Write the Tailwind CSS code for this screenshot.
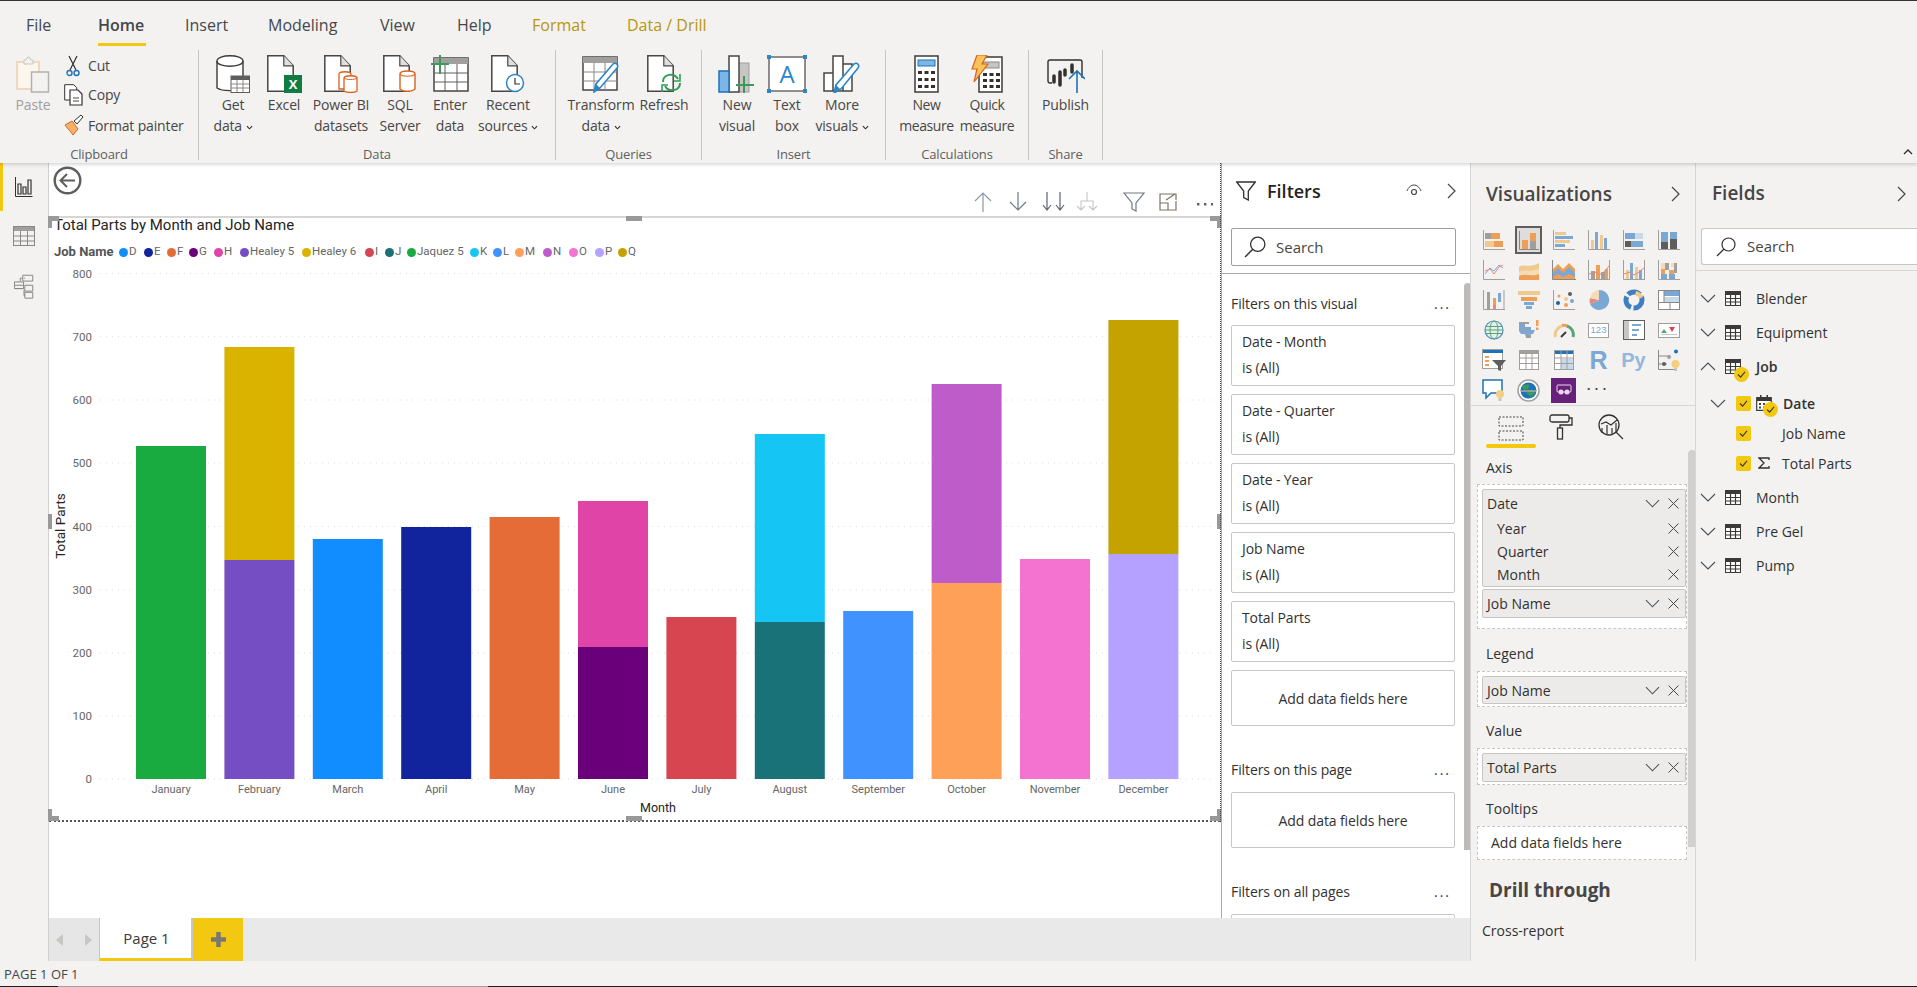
<!doctype html>
<html>
<head>
<meta charset="UTF-8">
<title>Power BI Desktop</title>
<script src="https://cdn.jsdelivr.net/npm/@tailwindcss/browser@4"></script>
</head>
<body class="m-0">
<!-- shared icons -->
<svg class="hidden">
  <symbol id="chev-down" viewBox="0 0 16 9"><path d="M1 1l7 7 7-7" fill="none" stroke="#4a4f55" stroke-width="1.1"/></symbol>
  <symbol id="chev-up" viewBox="0 0 16 9"><path d="M1 8l7-7 7 7" fill="none" stroke="#4a4f55" stroke-width="1.1"/></symbol>
  <symbol id="chev-right" viewBox="0 0 9 16"><path d="M1 1l7 7-7 7" fill="none" stroke="#484644" stroke-width="1.2"/></symbol>
  <symbol id="close" viewBox="0 0 11 11"><path d="M.5.5l10 10M10.5.5l-10 10" fill="none" stroke="#484644" stroke-width="1"/></symbol>
  <symbol id="table" viewBox="0 0 16 15"><rect x=".5" y=".5" width="15" height="14" fill="#fff" stroke="#3b3a39"/><rect x="0" y="0" width="16" height="4" fill="#3b3a39"/><path d="M5.500 4v10M10.500 4v10M1 7.500h14M1 11h14" stroke="#3b3a39" stroke-width="1.200"/></symbol>
  <symbol id="search" viewBox="0 0 20 20"><circle cx="12.500" cy="7.500" r="6.500" fill="none" stroke="#323130" stroke-width="1.200"/><path d="M8 12l-7 7" stroke="#323130" stroke-width="1.300"/></symbol>
  <symbol id="check" viewBox="0 0 10 8"><path d="M1 4l3 3 5-6" fill="none" stroke="#3b3a39" stroke-width="1.300"/></symbol>
  <symbol id="doc" viewBox="0 0 27 37"><path d="M.8.8h16l9.400 10v25.400H.8z" fill="#fff" stroke="#484644" stroke-width="1.500"/><path d="M16.800.8v10h9.400" fill="#e1dfdd" stroke="#484644" stroke-width="1.200"/></symbol>
</svg>

<div class="w-[1917px] h-[987px] flex flex-col overflow-hidden bg-[#f3f2f1] text-[#323130] text-[14px] [font-family:'Open_Sans',sans-serif]">
  <div class="h-px bg-[#333]"></div>

  <!-- tabs -->
  <div class="h-[45px] flex pl-[26px] text-[16px] text-[#44474b] relative z-20">
    <div class="w-[72px] leading-[48px]">File</div>
    <div class="w-[87px] leading-[48px]"><span class="block w-[48px] h-[45px] font-semibold border-b-[3px] border-[#f2c811]">Home</span></div>
    <div class="w-[83px] leading-[48px]">Insert</div>
    <div class="w-[112px] leading-[48px]">Modeling</div>
    <div class="w-[77px] leading-[48px]">View</div>
    <div class="w-[75px] leading-[48px]">Help</div>
    <div class="w-[95px] leading-[48px] text-[#b8960c]">Format</div>
    <div class="leading-[48px] text-[#b8960c]">Data / Drill</div>
  </div>

  <!-- ribbon -->
  <div class="h-[117px] pt-[4px] flex relative z-10 shadow-[0_2px_3px_rgba(0,0,0,0.14)] text-[14px] leading-[21px] text-center text-[#484644] tracking-[-0.15px]">
    <!-- clipboard -->
    <div class="w-[199px] h-[110px] border-r border-[#c8c6c4] flex flex-col">
      <div class="h-[95px] flex">
        <div class="w-[66px] flex flex-col items-center pt-[5px] text-[#a19f9d]">
          <svg width="34" height="38" viewBox="0 0 34 38"><path d="M1 7h22v27H1z" fill="#fdf6ec" stroke="#eed9bd" stroke-width="2"/><path d="M8 5h2l2-3h1l2 3h2v4H8z" fill="#f3f2f1" stroke="#c8c6c4"/><rect x="15.500" y="17" width="17" height="20" fill="#f3f2f1" stroke="#b3b0ad" stroke-width="1.500"/></svg>
          <span class="mt-[1px]">Paste</span>
        </div>
        <div class="flex flex-col pt-[1px] text-left">
          <div class="h-[29px] flex items-center">
            <svg class="w-[14px] h-[22px]" viewBox="0 0 14 22"><path d="M3 1l7 14M11 1L4 15" stroke="#323130" stroke-width="1.200" fill="none"/><circle cx="3.500" cy="18" r="2.500" fill="none" stroke="#1e72b8" stroke-width="1.400"/><circle cx="10.500" cy="18" r="2.500" fill="none" stroke="#1e72b8" stroke-width="1.400"/></svg>
            <span class="ml-[8px]">Cut</span>
          </div>
          <div class="h-[29px] flex items-center">
            <svg class="-ml-[2px] w-[20px] h-[22px]" viewBox="0 0 20 22"><path d="M.7.7h9l3 3V16H.7z" fill="#fff" stroke="#323130"/><path d="M6 6h8l4 4v11H6z" fill="#fff" stroke="#323130" stroke-width="1.200"/><path d="M9 14h6M9 17h6" stroke="#484644"/></svg>
            <span class="ml-[4px]">Copy</span>
          </div>
          <div class="h-[32px] flex items-center">
            <svg class="-ml-[2px] w-[20px] h-[22px]" viewBox="0 0 20 22"><path d="M1 11l7-4 6 8-5 6c-2-3-5-6-8-10z" fill="#f7b267" stroke="#d9631e"/><path d="M10 7l7-6 2 2-6 7z" fill="#fff" stroke="#323130"/></svg>
            <span class="ml-[4px]">Format painter</span>
          </div>
        </div>
      </div>
      <div class="h-[15px] leading-[18px] text-[13px] text-[#605e5c]">Clipboard</div>
    </div>

    <!-- data -->
    <div class="w-[357px] h-[110px] border-r border-[#c8c6c4] flex flex-col">
      <div class="h-[95px] flex pl-[8px]">
        <div class="w-[52px] flex flex-col items-center pt-[5px]">
          <svg width="34" height="38" viewBox="0 0 34 38"><path d="M1 6c0-7 26-7 26 0v27c-3 3-20 4-26 0z" fill="#fff" stroke="#3b3a39" stroke-width="1.400"/><path d="M1 6c0 7 26 7 26 0" fill="none" stroke="#3b3a39" stroke-width="1.400"/><rect x="15" y="21" width="18.500" height="16.500" fill="#fff" stroke="#605e5c"/><rect x="15" y="21" width="18.500" height="4" fill="#605e5c"/><path d="M21 25v12M27 25v12M15 29h18M15 33h18" stroke="#8a8886"/></svg>
          <span class="mt-[1px]">Get<br>data <svg class="inline w-[7px] h-[5px]" viewBox="0 0 8 5"><path d="M1 1l3 3 3-3" fill="none" stroke="#323130" stroke-width="1.300"/></svg></span>
        </div>
        <div class="w-[50px] flex flex-col items-center pt-[5px]">
          <svg width="35" height="38" viewBox="0 0 35 38"><use href="#doc" width="27" height="37"/><rect x="17" y="20" width="18" height="18" fill="#107c41"/><text x="26" y="34" text-anchor="middle" font-size="13" font-weight="700" fill="#fff">X</text></svg>
          <span class="mt-[1px]">Excel</span>
        </div>
        <div class="w-[64px] flex flex-col items-center pt-[5px]">
          <svg width="35" height="38" viewBox="0 0 35 38"><use href="#doc" width="27" height="37"/><path d="M15 19c0-3 12-3 12 0v15H15z" fill="#fff" stroke="#d9631e" stroke-width="1.300"/><path d="M20 23c0-3 13-3 13 0v13c-3 2-10 2-13 0z" fill="#fff" stroke="#d9631e" stroke-width="1.300"/><path d="M20 23c2 2 11 2 13 0" fill="none" stroke="#d9631e"/></svg>
          <span class="mt-[1px] whitespace-nowrap">Power BI<br>datasets</span>
        </div>
        <div class="w-[54px] flex flex-col items-center pt-[5px]">
          <svg width="35" height="38" viewBox="0 0 35 38"><use href="#doc" width="27" height="37"/><path d="M17 19c0-4 15-4 15 0v15c-3 3-12 3-15 0z" fill="#fff" stroke="#d9631e" stroke-width="1.400"/><path d="M17 19c2 3 13 3 15 0" fill="none" stroke="#d9631e" stroke-width="1.200"/></svg>
          <span class="mt-[1px]">SQL<br>Server</span>
        </div>
        <div class="w-[46px] flex flex-col items-center pt-[5px]">
          <svg width="38" height="38" viewBox="0 0 38 38"><rect x="3" y="3" width="34" height="33" fill="#fff" stroke="#484644" stroke-width="1.500"/><rect x="3" y="3" width="34" height="6" fill="#a19f9d"/><path d="M14 9v27M26 9v27M3 18h34M3 27h34" stroke="#605e5c"/><path d="M9 0v19M0 9h18" stroke="#3b9a57" stroke-width="2"/></svg>
          <span class="mt-[1px]">Enter<br>data</span>
        </div>
        <div class="w-[70px] flex flex-col items-center pt-[5px]">
          <svg width="34" height="38" viewBox="0 0 34 38"><use href="#doc" width="27" height="37"/><circle cx="24" cy="28" r="8.500" fill="#fff" stroke="#2a86c7" stroke-width="1.500"/><path d="M24 23v6h5" fill="none" stroke="#323130" stroke-width="1.200"/></svg>
          <span class="mt-[1px]">Recent<br>sources <svg class="inline w-[7px] h-[5px]" viewBox="0 0 8 5"><path d="M1 1l3 3 3-3" fill="none" stroke="#323130" stroke-width="1.300"/></svg></span>
        </div>
      </div>
      <div class="h-[15px] leading-[18px] text-[13px] text-[#605e5c]">Data</div>
    </div>

    <!-- queries -->
    <div class="w-[146px] h-[110px] border-r border-[#c8c6c4] flex flex-col">
      <div class="h-[95px] flex pl-[9px]">
        <div class="w-[72px] flex flex-col items-center pt-[5px]">
          <svg width="38" height="38" viewBox="0 0 38 38"><rect x="1" y="2" width="34" height="33" fill="#fff" stroke="#484644" stroke-width="1.500"/><rect x="1" y="2" width="34" height="6" fill="#a19f9d"/><path d="M12 8v27M23 8v27M1 17h34M1 26h34" stroke="#8a8886"/><path d="M12 37l2-8 17-20c3-2 6 1 4 4L18 33z" fill="#fff" stroke="#2a86c7" stroke-width="1.600"/><path d="M12 37l2-8 4 4z" fill="#2a86c7"/></svg>
          <span class="mt-[1px]">Transform<br>data <svg class="inline w-[7px] h-[5px]" viewBox="0 0 8 5"><path d="M1 1l3 3 3-3" fill="none" stroke="#323130" stroke-width="1.300"/></svg></span>
        </div>
        <div class="w-[54px] flex flex-col items-center pt-[5px]">
          <svg width="35" height="38" viewBox="0 0 35 38"><use href="#doc" width="27" height="37"/><path d="M16 27c0-8 11-10 15-3M33 28c0 8-11 10-15 3" fill="none" stroke="#2f9e55" stroke-width="2" /><path d="M33 19v7h-6M15 37v-7h6" fill="none" stroke="#2f9e55" stroke-width="1.600"/></svg>
          <span class="mt-[1px]">Refresh</span>
        </div>
      </div>
      <div class="h-[15px] leading-[18px] text-[13px] text-[#605e5c]">Queries</div>
    </div>

    <!-- insert -->
    <div class="w-[184px] h-[110px] border-r border-[#c8c6c4] flex flex-col">
      <div class="h-[95px] flex pl-[10px]">
        <div class="w-[50px] flex flex-col items-center pt-[5px]">
          <svg width="38" height="38" viewBox="0 0 38 38"><rect x="20" y="8" width="11" height="29" fill="#c8c6c4" stroke="#a19f9d"/><rect x="11" y="1" width="10" height="36" fill="#fff" stroke="#484644" stroke-width="1.500"/><rect x="1" y="16" width="10" height="21" fill="#7db5e8" stroke="#1e72b8" stroke-width="1.500"/><path d="M26 21v17M18 30h18" stroke="#3b9a57" stroke-width="2"/></svg>
          <span class="mt-[1px]">New<br>visual</span>
        </div>
        <div class="w-[50px] flex flex-col items-center pt-[5px]">
          <svg width="40" height="38" viewBox="0 0 40 38"><rect x="2" y="3" width="36" height="34" transform="translate(0 -1)" fill="#fff" stroke="#484644" stroke-width="1.200"/><rect y="0" width="4" height="4" fill="#2a86c7"/><rect x="36" y="0" width="4" height="4" fill="#2a86c7"/><rect y="34" width="4" height="4" fill="#2a86c7"/><rect x="36" y="34" width="4" height="4" fill="#2a86c7"/><text x="20" y="28" text-anchor="middle" font-size="24" fill="#2a86c7">A</text></svg>
          <span class="mt-[1px]">Text<br>box</span>
        </div>
        <div class="w-[60px] flex flex-col items-center pt-[5px]">
          <svg width="38" height="38" viewBox="0 0 38 38"><path d="M1 18h9v18H1zM10 1h10v35H10zM20 9h9v27H20z" fill="#fff" stroke="#484644" stroke-width="1.500"/><path d="M11 38l2-8 18-21c3-2 6 1 4 4L18 34z" fill="#fff" stroke="#2a86c7" stroke-width="1.600"/><path d="M11 38l2-8 4 4z" fill="#2a86c7"/></svg>
          <span class="mt-[1px] whitespace-nowrap">More<br>visuals <svg class="inline w-[7px] h-[5px]" viewBox="0 0 8 5"><path d="M1 1l3 3 3-3" fill="none" stroke="#323130" stroke-width="1.300"/></svg></span>
        </div>
      </div>
      <div class="h-[15px] leading-[18px] text-[13px] text-[#605e5c]">Insert</div>
    </div>

    <!-- calculations -->
    <div class="w-[143px] h-[110px] border-r border-[#c8c6c4] flex flex-col">
      <div class="h-[95px] flex pl-[10px] tracking-[-0.4px]">
        <div class="w-[61px] flex flex-col items-center pt-[5px]">
          <svg width="25" height="38" viewBox="0 0 25 38"><rect x="1" y="1" width="23" height="36" fill="#fff" stroke="#484644" stroke-width="1.600"/><rect x="4" y="5" width="17" height="6" fill="#7db5e8" stroke="#1e72b8"/><path d="M4 16h4v3H4zM10.500 16h4v3h-4zM17 16h4v3h-4zM4 23h4v3H4zM10.500 23h4v3h-4zM17 23h4v3h-4zM4 30h4v3H4zM10.500 30h4v3h-4zM17 30h4v3h-4z" fill="#323130"/></svg>
          <span class="mt-[1px]">New<br>measure</span>
        </div>
        <div class="w-[60px] flex flex-col items-center pt-[5px]">
          <svg width="32" height="38" viewBox="0 0 32 38"><rect x="8" y="2" width="23" height="35" fill="#fff" stroke="#484644" stroke-width="1.600"/><rect x="12" y="7" width="16" height="6" fill="#c8c6c4" stroke="#8a8886"/><path d="M12 18h4v3h-4zM18.500 18h4v3h-4zM25 18h4v3h-4zM12 24h4v3h-4zM18.500 24h4v3h-4zM25 24h4v3h-4zM12 30h4v3h-4zM18.500 30h4v3h-4zM25 30h4v3h-4z" fill="#323130"/><path d="M6 0h10l-5 9h6L3 27l3-13H1z" fill="#f7c35b" stroke="#d9631e" stroke-width="1.200"/></svg>
          <span class="mt-[1px]">Quick<br>measure</span>
        </div>
      </div>
      <div class="h-[15px] leading-[18px] text-[13px] text-[#605e5c]">Calculations</div>
    </div>

    <!-- share -->
    <div class="w-[74px] h-[110px] border-r border-[#c8c6c4] flex flex-col">
      <div class="h-[95px] flex flex-col items-center pt-[5px]">
        <svg width="38" height="38" viewBox="0 0 38 38"><path d="M5 28H3a2 2 0 0 1-2-2V7a2 2 0 0 1 2-2h30a2 2 0 0 1 2 2v16" fill="none" stroke="#323130" stroke-width="1.400"/><path d="M7 27v-6M13 30V17M18 20V15M25 17v-7" stroke="#323130" stroke-width="3.500" stroke-linecap="round"/><path d="M30 38V17M22 24l8-8 8 8" fill="none" stroke="#1e72b8" stroke-width="1.600"/></svg>
        <span class="mt-[1px]">Publish</span>
      </div>
      <div class="h-[15px] leading-[18px] text-[13px] text-[#605e5c]">Share</div>
    </div>

    <svg class="absolute right-[4px] bottom-[8px]" width="10" height="6" viewBox="0 0 10 6"><path d="M1 5l4-4 4 4" fill="none" stroke="#323130" stroke-width="1.400"/></svg>
  </div>

  <!-- main -->
  <div class="h-[798px] flex">
    <!-- page views -->
    <div class="w-[49px] border-r border-[#d2d0ce] flex flex-col">
      <div class="h-[48px] border-l-[3px] border-[#f2c811] flex items-center justify-center pr-[4px]">
        <svg width="18" height="20" viewBox="0 0 18 20"><path d="M.5 0v19.500h17" fill="none" stroke="#323130"/><path d="M3 7h3v10H3zM8 10h3v7H8zM13 3h3v14h-3z" fill="none" stroke="#323130" stroke-width="1.200"/></svg>
      </div>
      <div class="h-[50px] flex items-center justify-center">
        <svg width="22" height="20" viewBox="0 0 22 20"><rect x=".5" y=".5" width="21" height="19" fill="none" stroke="#8a8886"/><rect x="1" y="1" width="20" height="4" fill="#a19f9d"/><path d="M7.500 5v14M14.500 5v14M1 10h20M1 15h20" stroke="#8a8886"/></svg>
      </div>
      <div class="h-[50px] flex items-center justify-center">
        <svg width="20" height="25" viewBox="0 0 24 30"><path d="M10.500 1.500h12v7h-12zM.5 9.500h11v8H.5zM.5 13.500h11M13 13.500h9.500v7H13zM.5 17.500h11M13 22h9.500v7H13zM13 5h-1" fill="none" stroke="#8a8886" stroke-width="1.200"/><path d="M10.500 5h-3v4M12 19v7h1" fill="none" stroke="#8a8886" stroke-width="1.200"/></svg>
      </div>
    </div>

    <div class="w-[1421px] flex flex-col">
      <div class="h-[755px] flex">
        <!-- report canvas -->
        <div class="w-[1172px] bg-white relative">
          <!-- back button -->
          <svg class="absolute left-[4px] top-[3px]" width="29" height="29" viewBox="0 0 29 29"><circle cx="14.500" cy="14.500" r="12.800" fill="none" stroke="#605e5c" stroke-width="2.400"/><path d="M22 14.500H8M14 8l-6.500 6.500L14 21" fill="none" stroke="#605e5c" stroke-width="2"/></svg>
          <!-- visual header -->
          <svg class="absolute left-[924px] top-[28px]" width="240" height="22" viewBox="0 0 240 22">
            <path d="M10 21V2M2 10l8-8 8 8" fill="none" stroke="#8a9aa5" stroke-width="1.200"/>
            <path d="M45 1v18M37 11l8 8 8-8" fill="none" stroke="#6d7a85" stroke-width="1.200"/>
            <path d="M74 1v18M70 14l4 5 4-5M87 1v18M83 14l4 5 4-5" fill="none" stroke="#5a6670" stroke-width="1.200"/>
            <path d="M114 1v9M108 18v-8h12v8M104 15l4 4 4-4M116 15l4 4 4-4" fill="none" stroke="#c8c6c4" stroke-width="1.100"/>
            <path d="M151 2h20l-8 10v8l-4-2v-6z" fill="none" stroke="#6d7a85" stroke-width="1.200"/>
            <path d="M197 3h-10v16h16v-9M187 12h8v7M193 9l9-6M197 3h6v6" fill="none" stroke="#7d7468" stroke-width="1.200"/>
            <path d="M224 12h2.400v2.400H224zM231 12h2.400v2.400H231zM238 12h2v2.400H238z" fill="#605e5c"/>
          </svg>

          <!-- selected visual -->
          <div class="absolute left-0 top-[53px] w-[1171px] h-[606px] border-t-2 border-[#d8d6d4] border-b-2 [border-bottom-style:dotted] [border-bottom-color:#555] [font-family:Roboto,sans-serif]">
            <div class="pl-[5px] h-[16px] leading-[14px] text-[15px] text-[#252423]">Total Parts by Month and Job Name</div>
            <div class="mt-[9px] pl-[5px] h-[18px] flex items-center text-[11.500px] text-[#666]">
              <b class="w-[65px] text-[13px] font-bold text-[#555] whitespace-nowrap">Job Name</b>
              <div class="w-[25px] flex items-center gap-[1px]"><i class="w-[9px] h-[9px] rounded-full bg-[#118dff]"></i>D</div>
              <div class="w-[23px] flex items-center gap-[1px]"><i class="w-[9px] h-[9px] rounded-full bg-[#12239e]"></i>E</div>
              <div class="w-[22px] flex items-center gap-[1px]"><i class="w-[9px] h-[9px] rounded-full bg-[#e66c37]"></i>F</div>
              <div class="w-[25px] flex items-center gap-[1px]"><i class="w-[9px] h-[9px] rounded-full bg-[#6b007b]"></i>G</div>
              <div class="w-[26px] flex items-center gap-[1px]"><i class="w-[9px] h-[9px] rounded-full bg-[#e044a7]"></i>H</div>
              <div class="w-[62px] flex items-center gap-[1px]"><i class="w-[9px] h-[9px] rounded-full bg-[#744ec2]"></i>Healey 5</div>
              <div class="w-[63px] flex items-center gap-[1px]"><i class="w-[9px] h-[9px] rounded-full bg-[#d9b300]"></i>Healey 6</div>
              <div class="w-[20px] flex items-center gap-[1px]"><i class="w-[9px] h-[9px] rounded-full bg-[#d64550]"></i>I</div>
              <div class="w-[22px] flex items-center gap-[1px]"><i class="w-[9px] h-[9px] rounded-full bg-[#197278]"></i>J</div>
              <div class="w-[63px] flex items-center gap-[1px]"><i class="w-[9px] h-[9px] rounded-full bg-[#1aab40]"></i>Jaquez 5</div>
              <div class="w-[23px] flex items-center gap-[1px]"><i class="w-[9px] h-[9px] rounded-full bg-[#15c6f4]"></i>K</div>
              <div class="w-[22px] flex items-center gap-[1px]"><i class="w-[9px] h-[9px] rounded-full bg-[#4092ff]"></i>L</div>
              <div class="w-[28px] flex items-center gap-[1px]"><i class="w-[9px] h-[9px] rounded-full bg-[#ffa058]"></i>M</div>
              <div class="w-[26px] flex items-center gap-[1px]"><i class="w-[9px] h-[9px] rounded-full bg-[#be5dc9]"></i>N</div>
              <div class="w-[26px] flex items-center gap-[1px]"><i class="w-[9px] h-[9px] rounded-full bg-[#f472d0]"></i>O</div>
              <div class="w-[23px] flex items-center gap-[1px]"><i class="w-[9px] h-[9px] rounded-full bg-[#b5a1ff]"></i>P</div>
              <div class="flex items-center gap-[1px]"><i class="w-[9px] h-[9px] rounded-full bg-[#c4a200]"></i>Q</div>
            </div>
            <!-- plot -->
            <svg class="absolute left-0 top-[-2px]" width="1171" height="606" viewBox="49 216 1171 606" font-family="Roboto, sans-serif">
              <g stroke="#ddd" stroke-dasharray="1 5">
                <path d="M100 273.500H1211M100 336.700H1211M100 400H1211M100 463H1211M100 526.500H1211M100 590H1211M100 653H1211M100 716H1211M100 779H1211"/>
              </g>
              <g font-size="11.500" fill="#666" text-anchor="end">
                <text x="92" y="277.500">800</text><text x="92" y="340.700">700</text><text x="92" y="404">600</text><text x="92" y="467">500</text><text x="92" y="530.500">400</text><text x="92" y="594">300</text><text x="92" y="657">200</text><text x="92" y="720">100</text><text x="92" y="783">0</text>
              </g>
              <rect x="136" y="446" width="70" height="333" fill="#1aab40"/>
              <rect x="224.400" y="347" width="70" height="213" fill="#d9b300"/><rect x="224.400" y="560" width="70" height="219" fill="#744ec2"/>
              <rect x="312.800" y="539" width="70" height="240" fill="#118dff"/>
              <rect x="401.200" y="527" width="70" height="252" fill="#12239e"/>
              <rect x="489.600" y="517" width="70" height="262" fill="#e66c37"/>
              <rect x="578" y="501" width="70" height="146" fill="#e044a7"/><rect x="578" y="647" width="70" height="132" fill="#6b007b"/>
              <rect x="666.400" y="617" width="70" height="162" fill="#d64550"/>
              <rect x="754.800" y="434" width="70" height="188" fill="#15c6f4"/><rect x="754.800" y="622" width="70" height="157" fill="#197278"/>
              <rect x="843.200" y="611" width="70" height="168" fill="#4092ff"/>
              <rect x="931.600" y="384" width="70" height="199" fill="#be5dc9"/><rect x="931.600" y="583" width="70" height="196" fill="#ffa058"/>
              <rect x="1020" y="559" width="70" height="220" fill="#f472d0"/>
              <rect x="1108.400" y="320" width="70" height="234" fill="#c4a200"/><rect x="1108.400" y="554" width="70" height="225" fill="#b5a1ff"/>
              <g font-size="11" fill="#666" text-anchor="middle">
                <text x="171" y="793">January</text><text x="259.400" y="793">February</text><text x="347.800" y="793">March</text><text x="436.200" y="793">April</text><text x="524.600" y="793">May</text><text x="613" y="793">June</text><text x="701.400" y="793">July</text><text x="789.800" y="793">August</text><text x="878.200" y="793">September</text><text x="966.600" y="793">October</text><text x="1055" y="793">November</text><text x="1143.400" y="793">December</text>
              </g>
              <text x="658" y="812" font-size="12.500" fill="#252423" text-anchor="middle">Month</text>
              <text transform="translate(65 526) rotate(-90)" font-size="13.500" fill="#252423" text-anchor="middle">Total Parts</text>
            </svg>
            <!-- resize handles -->
            <div class="absolute -left-px -top-[2px] w-[11px] h-[5px] bg-[#999]"></div>
            <div class="absolute -left-px -top-[2px] w-[4px] h-[12px] bg-[#999]"></div>
            <div class="absolute left-[577px] -top-[2px] w-[16px] h-[5px] bg-[#999]"></div>
            <div class="absolute right-[-1px] -top-[2px] w-[11px] h-[5px] bg-[#999]"></div>
            <div class="absolute right-[-1px] -top-[2px] w-[4px] h-[12px] bg-[#999]"></div>
            <div class="absolute -left-px top-[296px] w-[4px] h-[15px] bg-[#999]"></div>
            <div class="absolute right-[-1px] top-[296px] w-[4px] h-[15px] bg-[#999]"></div>
            <div class="absolute -left-px -bottom-[1px] w-[11px] h-[5px] bg-[#999]"></div>
            <div class="absolute -left-px -bottom-[1px] w-[4px] h-[12px] bg-[#999]"></div>
            <div class="absolute left-[577px] -bottom-[1px] w-[16px] h-[5px] bg-[#999]"></div>
            <div class="absolute right-[-1px] -bottom-[1px] w-[11px] h-[5px] bg-[#999]"></div>
            <div class="absolute right-[-1px] -bottom-[1px] w-[4px] h-[12px] bg-[#999]"></div>
          </div>
          <div class="absolute right-0 top-0 h-[659px] border-r border-dotted border-[#444]"></div>
        </div>

        <!-- filters -->
        <div class="w-[249px] bg-white border-l border-[#aaa] relative overflow-hidden">
          <div class="h-[65px] pt-[14px]">
            <div class="h-[28px] flex items-center pl-[14px] relative">
              <svg width="20" height="20" viewBox="0 0 20 20"><path d="M.7 1h18.600l-7 9v9l-4.600-2.500V10z" fill="none" stroke="#323130" stroke-width="1.300"/></svg>
              <span class="ml-[11px] text-[18px] font-semibold text-[#252423]">Filters</span>
              <svg class="absolute left-[184px] top-[7px]" width="16" height="12" viewBox="0 0 16 12"><path d="M1 7c3-8 11-8 14 0" fill="none" stroke="#484644"/><circle cx="8" cy="8" r="2.500" fill="none" stroke="#484644" stroke-width="1.200"/></svg>
              <svg class="absolute left-[225px] top-[6px] w-[9px] h-[16px]"><use href="#chev-right"/></svg>
            </div>
          </div>
          <div class="mx-[9px] w-[225px] h-[38px] rounded-[2px] border border-[#a19f9d] flex items-center pl-[12px] text-[15px] text-[#484644]">
            <svg class="w-[22px] h-[22px]" viewBox="0 0 20 20"><use href="#search"/></svg><span class="ml-[10px]">Search</span>
          </div>
          <div class="mt-[7px] border-b border-[#aaa]"></div>
          <div class="pl-[9px] w-[233px] tracking-[-0.1px]">
            <div class="mt-[20px] h-[20px] leading-[20px] flex justify-between">Filters on this visual <span class="pr-[4px] tracking-[2px]">...</span></div>
            <div class="mt-[11px] h-[61px] border border-[#c8c6c4] rounded-[2px] pl-[10px] pt-[3px] leading-[26px]">Date - Month<br>is (All)</div>
            <div class="mt-[8px] h-[61px] border border-[#c8c6c4] rounded-[2px] pl-[10px] pt-[3px] leading-[26px]">Date - Quarter<br>is (All)</div>
            <div class="mt-[8px] h-[61px] border border-[#c8c6c4] rounded-[2px] pl-[10px] pt-[3px] leading-[26px]">Date - Year<br>is (All)</div>
            <div class="mt-[8px] h-[61px] border border-[#c8c6c4] rounded-[2px] pl-[10px] pt-[3px] leading-[26px]">Job Name<br>is (All)</div>
            <div class="mt-[8px] h-[61px] border border-[#c8c6c4] rounded-[2px] pl-[10px] pt-[3px] leading-[26px]">Total Parts<br>is (All)</div>
            <div class="mt-[8px] h-[56px] border border-[#c8c6c4] rounded-[2px] flex items-center justify-center">Add data fields here</div>
            <div class="mt-[34px] h-[20px] leading-[20px] flex justify-between">Filters on this page <span class="pr-[4px] tracking-[2px]">...</span></div>
            <div class="mt-[12px] h-[56px] border border-[#c8c6c4] rounded-[2px] flex items-center justify-center">Add data fields here</div>
            <div class="mt-[34px] h-[20px] leading-[20px] flex justify-between">Filters on all pages <span class="pr-[4px] tracking-[2px]">...</span></div>
            <div class="mt-[12px] h-[56px] border border-[#c8c6c4] rounded-[2px]"></div>
          </div>
          <div class="absolute left-[242px] top-[120px] w-[7px] h-[567px] rounded-t-[4px] bg-[#bdbbb9]"></div>
        </div>
      </div>

      <!-- page tabs -->
      <div class="h-[43px] flex bg-[#e9e9e9]">
        <div class="w-[50px] flex items-center justify-between px-[7px] bg-[#e6e6e6]">
          <svg width="7" height="12" viewBox="0 0 7 12"><path d="M7 0v12L0 6z" fill="#c8c6c4"/></svg>
          <svg width="7" height="12" viewBox="0 0 7 12"><path d="M0 0v12l7-6z" fill="#c8c6c4"/></svg>
        </div>
        <div class="w-[94px] pl-[2px] bg-white border-l border-r-2 border-[#c8c6c4] border-b-[3px] [border-bottom-color:#f2c811] flex items-center justify-center text-[15px] text-[#3b3a39]">Page 1</div>
        <div class="w-[50px] bg-[#f2c811] flex items-center justify-center">
          <svg width="15" height="15" viewBox="0 0 15 15"><path d="M7.500 0v15M0 7.500h15" stroke="#7a7870" stroke-width="4.500"/></svg>
        </div>
      </div>
    </div>

    <!-- visualizations -->
    <div class="w-[226px] border-l border-r border-[#d8d6d4] relative overflow-hidden">
      <div class="h-[62px] flex items-center justify-between pl-[15px] pr-[15px]">
        <span class="text-[19px] font-semibold text-[#484644]">Visualizations</span>
        <svg class="w-[9px] h-[16px]"><use href="#chev-right"/></svg>
      </div>
      <!-- visual types -->
      <div class="h-[181px] border-b border-[#d8d6d4] pl-[5px]">
        <div class="grid grid-cols-[repeat(6,35px)] auto-rows-[30px] place-items-center">
          <svg width="22" height="20" viewBox="0 0 22 20"><path d="M.5 0v19.500H22" fill="none" stroke="#a19f9d"/><path d="M2 3h6v6H2z" fill="#a19f9d"/><path d="M8 3h9v6H8zM11 11h9v6h-9z" fill="#ef9f55"/><path d="M2 11h9v6H2z" fill="#f0c98d"/></svg>
          <div class="w-[27px] h-[28px] border-2 border-[#605e5c] bg-[#dfdddb] flex items-center justify-center"><svg width="20" height="19" viewBox="0 0 20 19"><path d="M.5 0v18.500H20" fill="none" stroke="#8a8886"/><path d="M3 9h6v9H3z" fill="#ef9f55"/><path d="M11 2h6v8h-6z" fill="#ef9f55"/><path d="M11 10h6v8h-6z" fill="#a19f9d"/></svg></div>
          <svg width="22" height="20" viewBox="0 0 22 20"><path d="M.5 0v19.500H22" fill="none" stroke="#a19f9d"/><path d="M2 2h11v3H2zM2 10h15v3H2z" fill="#f0c98d"/><path d="M2 6h18v3H2zM2 14h10v3H2z" fill="#7ba7d4"/></svg>
          <svg width="22" height="20" viewBox="0 0 22 20"><path d="M.5 0v19.500H22" fill="none" stroke="#a19f9d"/><path d="M3 10h3v9H3zM12 5h3v14h-3z" fill="#f0c98d"/><path d="M7 2h3v17H7zM16 8h3v11h-3z" fill="#7ba7d4"/></svg>
          <svg width="22" height="20" viewBox="0 0 22 20"><path d="M.5 0v19.500H22" fill="none" stroke="#a19f9d"/><path d="M2 3h10v6H2z" fill="#7ba7d4"/><path d="M12 3h8v6h-8z" fill="#c8d9ea"/><path d="M2 11h6v6H2z" fill="#605e5c"/><path d="M8 11h12v6H8z" fill="#7ba7d4"/></svg>
          <svg width="22" height="20" viewBox="0 0 22 20"><path d="M.5 0v19.500H22" fill="none" stroke="#a19f9d"/><path d="M3 2h7v10H3zM12 2h7v7h-7z" fill="#7ba7d4"/><path d="M3 12h7v7H3zM12 9h7v10h-7z" fill="#605e5c"/></svg>

          <svg width="22" height="20" viewBox="0 0 22 20"><path d="M.5 0v19.500H22" fill="none" stroke="#a19f9d"/><path d="M2 14l5-6 4 3 5-6 4 3" fill="none" stroke="#7ba7d4"/><path d="M2 11l5-2 4 5 5-7 4-2" fill="none" stroke="#e9877a"/></svg>
          <svg width="22" height="20" viewBox="0 0 22 20"><path d="M1 7c5-4 8 2 20-4v6c-8 4-14 0-20 3z" fill="#f0c98d"/><path d="M1 12c6-3 12 1 20-3v5c-8 3-13-1-20 2z" fill="#f5dcb6"/><path d="M1 16c7-3 13 1 20-2v6H1z" fill="#ef9f55"/></svg>
          <svg width="24" height="20" viewBox="0 0 24 20"><path d="M1 9l5-5 5 5 6-6 6 6v11H1z" fill="#ef9f55"/><path d="M1 13l5-5 5 5 6-6 6 6v7H1z" fill="#7ba7d4"/><path d="M1 17l5-3 5 3 6-3 6 3v3H1z" fill="#ef9f55"/><path d="M.5 0v19.500H24" fill="none" stroke="#8a8886"/></svg>
          <svg width="22" height="20" viewBox="0 0 22 20"><path d="M.5 0v19.500H22M21.500 0v19.500" fill="none" stroke="#a19f9d"/><path d="M3 11h4v8H3zM13 12h4v7h-4z" fill="#a19f9d"/><path d="M8 5h4v14H8zM17 9h3v10h-3z" fill="#ef9f55"/><path d="M1 14l6-2 4 3 5-3 5-6" fill="none" stroke="#e9877a"/></svg>
          <svg width="22" height="20" viewBox="0 0 22 20"><path d="M.5 0v19.500H22M21.500 0v19.500" fill="none" stroke="#a19f9d"/><path d="M3 10h3v9H3zM12 7h3v12h-3z" fill="#f0c98d"/><path d="M7 3h3v16H7zM16 10h3v9h-3z" fill="#7ba7d4"/><path d="M1 14l6-2 4 3 5-3 5-4" fill="none" stroke="#e9877a"/></svg>
          <svg width="22" height="20" viewBox="0 0 22 20"><path d="M.5 0v19.500H22" fill="none" stroke="#a19f9d"/><path d="M3 3h4v6H3zM13 3h3v4h-3z" fill="#f5dcb6"/><path d="M7 3h4v7H7zM16 3h3v10h-3z" fill="#a19f9d"/><path d="M3 9h4v5H3zM11 10h5v4h-5z" fill="#ef9f55"/><path d="M3 14h6v5H3zM11 14h6v5h-6z" fill="#7ba7d4"/></svg>

          <svg width="22" height="20" viewBox="0 0 22 20"><path d="M.5 0v19.500H22M21 0v19.500" fill="none" stroke="#a19f9d"/><path d="M4 2h3v17H4z" fill="#a19f9d"/><path d="M10 8h3v7h-3z" fill="#ef9f55"/><path d="M10 15h3v4h-3z" fill="#e9877a"/><path d="M15 3h3v9h-3z" fill="#7ba7d4"/></svg>
          <svg width="22" height="18" viewBox="0 0 22 18"><path d="M0 0h22v4H0z" fill="#f0c98d"/><path d="M3 6h16v4H3z" fill="#ef9f55"/><path d="M6 11h10v3H6z" fill="#7ba7d4"/><path d="M8 15h6v3H8z" fill="#7ba7d4"/></svg>
          <svg width="22" height="20" viewBox="0 0 22 20"><path d="M.5 0v19.500H22" fill="none" stroke="#a19f9d"/><circle cx="5" cy="13" r="2" fill="#1e5f9e"/><circle cx="6" cy="6" r="1.500" fill="#ef9f55"/><circle cx="13" cy="9" r="2" fill="#f0c98d"/><circle cx="17" cy="4" r="2" fill="#605e5c"/><circle cx="19" cy="11" r="2" fill="#7ba7d4"/><circle cx="13" cy="15" r="2" fill="#ef9f55"/></svg>
          <svg width="22" height="22" viewBox="0 0 22 22"><path d="M11 11V1a10 10 0 1 1-9 14z" fill="#7ba7d4"/><path d="M11 11L2 15a10 10 0 0 1 0-6z" fill="#e9877a"/><path d="M11 11L2 9a10 10 0 0 1 9-8z" fill="#f5dcb6"/></svg>
          <svg width="22" height="22" viewBox="0 0 22 22"><circle cx="11" cy="11" r="8" fill="none" stroke="#3f7fbf" stroke-width="5" stroke-dasharray="13 2.500"/><path d="M13 2a9 9 0 0 1 7 6l-4 2a5 5 0 0 0-4-4z" fill="#f0c98d"/></svg>
          <svg width="22" height="20" viewBox="0 0 22 20"><rect x=".5" y=".5" width="21" height="19" fill="#fff" stroke="#8a8886"/><path d="M6 1h15v5H6z" fill="#7ba7d4"/><path d="M6 7h15v5H6z" fill="#c8d9ea"/><path d="M6 .5v12M1 12.500h20M12 12.500v7" fill="none" stroke="#8a8886"/></svg>

          <svg width="20" height="20" viewBox="0 0 20 20"><circle cx="10" cy="10" r="9" fill="#e4f0ea" stroke="#4f8cc9" stroke-width="1.200"/><ellipse cx="10" cy="10" rx="4" ry="9" fill="none" stroke="#5aa37a"/><path d="M2 6.500h16M1 10h18M2 13.500h16" stroke="#5aa37a"/></svg>
          <svg width="22" height="20" viewBox="0 0 22 20"><path d="M1 3h6v4h6v3h4l-2 4-4 1-2 3H8l-1-4H3l-2-3z" fill="#7ba7d4"/><path d="M1 2h10v2H1zM8 15h5v3H8zM3 9h5v2H3z" fill="#a19f9d"/><path d="M18 0h2.500v6H18zM18 7.500h2.500V10H18z" fill="#ef9f55"/></svg>
          <svg width="22" height="16" viewBox="0 0 22 16"><path d="M2.500 15A9 9 0 0 1 9 4" fill="none" stroke="#f0c98d" stroke-width="3"/><path d="M9 3.500a9 9 0 0 1 5 .5" fill="none" stroke="#ef9f55" stroke-width="3"/><path d="M14 4a9 9 0 0 1 6 11" fill="none" stroke="#5aa37a" stroke-width="3"/><path d="M8 15l5-5" stroke="#3b3a39" stroke-width="2"/></svg>
          <div class="w-[21px] h-[15px] border border-[#a19f9d] bg-white flex items-center justify-center text-[9.500px] leading-none text-[#7ba7d4] [font-family:'Liberation_Sans',sans-serif]">123</div>
          <svg width="22" height="20" viewBox="0 0 22 20"><rect x=".5" y=".5" width="21" height="19" fill="#fff" stroke="#605e5c"/><path d="M1 1h5v18H1z" fill="#c8c6c4"/><path d="M9 4h9v2H9zM9 9h7v2H9zM9 14h5v2H9z" fill="#7ba7d4"/></svg>
          <svg width="22" height="15" viewBox="0 0 22 15"><rect x=".5" y=".5" width="21" height="14" fill="#fff" stroke="#a19f9d"/><path d="M3 10l3-4 3 4z" fill="#5aa37a"/><path d="M11 4h6l-3 5z" fill="#d64550"/><path d="M3 11.500h16" stroke="#c8c6c4"/></svg>

          <svg width="24" height="22" viewBox="0 0 24 22"><rect x=".5" y=".5" width="20" height="19" fill="#fff" stroke="#a19f9d"/><path d="M1 1h20v3H1z" fill="#1e72b8"/><path d="M3 7h4v2H3zM3 11h4v2H3zM3 15h4v2H3z" fill="#ef9f55"/><path d="M10 11h14l-5 6v5l-3-1v-4z" fill="#605e5c"/></svg>
          <svg width="20" height="20" viewBox="0 0 20 20"><rect x=".5" y=".5" width="19" height="19" fill="#fff" stroke="#a19f9d"/><path d="M1 1h18v3H1z" fill="#a19f9d"/><path d="M7 1v18M13 1v18M1 8h18M1 13.500h18" stroke="#a19f9d"/></svg>
          <svg width="20" height="20" viewBox="0 0 20 20"><rect x=".5" y=".5" width="19" height="19" fill="#fff" stroke="#a19f9d"/><path d="M1 1h18v3H1z" fill="#1e72b8"/><path d="M7 9h12v10H7z" fill="#c8d9ea"/><path d="M7 1v18M13 1v18M1 8h18M1 13.500h18" stroke="#a19f9d"/></svg>
          <span class="text-[25px] leading-none font-bold text-[#7ba7d4] [font-family:'Liberation_Sans',sans-serif]">R</span>
          <span class="text-[20px] leading-none font-bold text-[#93b8dc] [font-family:'Liberation_Sans',sans-serif]">Py</span>
          <svg width="22" height="22" viewBox="0 0 22 22"><path d="M.5 1v19.500H16" fill="none" stroke="#8a8886"/><path d="M1 7h11M1 15h8" stroke="#8a8886"/><circle cx="18" cy="2.500" r="2" fill="#1e72b8"/><circle cx="11" cy="8" r="2" fill="#a19f9d"/><circle cx="6" cy="15" r="2" fill="#605e5c"/><circle cx="17.500" cy="15" r="4" fill="#f5cf7e"/><path d="M16 19h3v3h-3z" fill="#c8c6c4"/></svg>

          <svg width="24" height="22" viewBox="0 0 24 22"><path d="M1 1h19v13H9l-5 5v-5H1z" fill="#fff" stroke="#1e72b8" stroke-width="1.500"/><circle cx="18" cy="15" r="4" fill="#f5cf7e"/><path d="M16.500 19h3v3h-3z" fill="#c8c6c4"/></svg>
          <svg width="23" height="23" viewBox="0 0 23 23"><circle cx="11.500" cy="11.500" r="10.500" fill="#fff" stroke="#a19f9d" stroke-width="1.500"/><circle cx="11.500" cy="11.500" r="8" fill="#1e72b8"/><path d="M5 8c3-3 6-3 8-2l-2 4-4 1zM9 14l6-3 3 3-4 4z" fill="#3b9a57"/><path d="M4 12h15" stroke="#f0c98d"/></svg>
          <div class="w-[25px] h-[25px] bg-[#68217a] flex items-center justify-center"><svg width="16" height="12" viewBox="0 0 16 12"><rect x="1" y="1" width="14" height="7" rx="1" fill="none" stroke="#e8d6ec"/><circle cx="5" cy="8" r="2.500" fill="#e8d6ec"/><circle cx="11" cy="8" r="2.500" fill="#e8d6ec"/></svg></div>
          <span class="leading-none tracking-[4px] text-[#323130] -mt-[10px] font-semibold">...</span>
        </div>
      </div>
      <!-- field / format / analytics tabs -->
      <div class="h-[47px] pl-[15px] flex relative">
        <div class="w-[50px] h-[47px] flex justify-center pt-[10px]"><svg width="26" height="26" viewBox="0 0 26 26"><path d="M1 1h24v9H1zM1 15h24v9H1z" fill="none" stroke="#484644" stroke-dasharray="2 1.500"/></svg></div>
        <div class="w-[50px] h-[47px] flex justify-center pt-[8px]"><svg width="24" height="26" viewBox="0 0 24 26"><rect x="1" y="1" width="19" height="7" rx="2" fill="none" stroke="#323130" stroke-width="1.300"/><path d="M20 4h3v7H11v3" fill="none" stroke="#323130" stroke-width="1.300"/><rect x="8.500" y="14" width="5" height="11" fill="none" stroke="#323130" stroke-width="1.300"/></svg></div>
        <div class="w-[50px] h-[47px] flex justify-center pt-[8px]"><svg width="26" height="26" viewBox="0 0 26 26"><circle cx="11" cy="11" r="10" fill="none" stroke="#323130" stroke-width="1.300"/><path d="M4 19v-5M9 20v-9M14 20v-6M18 18v-9M3 10l5-2 5 3 6-5M18 18l7 7" fill="none" stroke="#323130" stroke-width="1.200"/></svg></div>
        <div class="absolute left-[15px] top-[38px] w-[50px] h-[4px] rounded-full bg-[#f2c811]"></div>
      </div>

      <div class="pr-[8px]">
        <div class="h-[28px] leading-[29px] pl-[15px]">Axis</div>
        <div class="mt-[3px] ml-[6px] h-[145px] border border-dashed border-[#c8c6c4] bg-white p-[4px]">
          <div class="h-[98px] w-[204px] border border-[#c8c6c4] rounded-[2px] bg-[#edebe9]">
            <div class="h-[27px] flex items-center pl-[4px]">Date<svg class="ml-auto mr-[1px] w-[15px] h-[9px]"><use href="#chev-down"/></svg><svg class="ml-[7px] mr-[6px] w-[11px] h-[11px]"><use href="#close"/></svg></div>
            <div class="h-[23px] flex items-center pl-[14px]">Year<svg class="ml-auto mr-[6px] w-[11px] h-[11px]"><use href="#close"/></svg></div>
            <div class="h-[23px] flex items-center pl-[14px]">Quarter<svg class="ml-auto mr-[6px] w-[11px] h-[11px]"><use href="#close"/></svg></div>
            <div class="h-[23px] flex items-center pl-[14px]">Month<svg class="ml-auto mr-[6px] w-[11px] h-[11px]"><use href="#close"/></svg></div>
          </div>
          <div class="mt-[2px] h-[29px] w-[204px] border border-[#c8c6c4] rounded-[2px] bg-[#edebe9] flex items-center pl-[4px]">Job Name<svg class="ml-auto mr-[1px] w-[15px] h-[9px]"><use href="#chev-down"/></svg><svg class="ml-[7px] mr-[6px] w-[11px] h-[11px]"><use href="#close"/></svg></div>
        </div>
        <div class="mt-[11px] h-[28px] leading-[28px] pl-[15px]">Legend</div>
        <div class="mt-[3px] ml-[6px] h-[36px] border border-dashed border-[#c8c6c4] bg-white p-[4px]">
          <div class="h-[28px] w-[204px] border border-[#c8c6c4] rounded-[2px] bg-[#edebe9] flex items-center pl-[4px]">Job Name<svg class="ml-auto mr-[1px] w-[15px] h-[9px]"><use href="#chev-down"/></svg><svg class="ml-[7px] mr-[6px] w-[11px] h-[11px]"><use href="#close"/></svg></div>
        </div>
        <div class="mt-[10px] h-[28px] leading-[28px] pl-[15px]">Value</div>
        <div class="mt-[3px] ml-[6px] h-[37px] border border-dashed border-[#c8c6c4] bg-white p-[4px]">
          <div class="h-[29px] w-[204px] border border-[#c8c6c4] rounded-[2px] bg-[#edebe9] flex items-center pl-[4px]">Total Parts<svg class="ml-auto mr-[1px] w-[15px] h-[9px]"><use href="#chev-down"/></svg><svg class="ml-[7px] mr-[6px] w-[11px] h-[11px]"><use href="#close"/></svg></div>
        </div>
        <div class="mt-[10px] h-[28px] leading-[28px] pl-[15px]">Tooltips</div>
        <div class="mt-[3px] ml-[6px] h-[34px] border border-dashed border-[#c8c6c4] bg-white pl-[13px] leading-[32px]">Add data fields here</div>
        <div class="mt-[15px] h-[30px] leading-[30px] pl-[18px] text-[19px] font-bold text-[#484644]">Drill through</div>
        <div class="mt-[16px] h-[20px] leading-[20px] pl-[11px]">Cross-report</div>
      </div>
      <div class="absolute left-[217px] top-[287px] w-[8px] h-[397px] rounded-t-[4px] bg-[#d2d0ce]"></div>
    </div>

    <!-- fields -->
    <div class="w-[221px] relative overflow-hidden">
      <div class="h-[65px] flex items-center justify-between pl-[16px] pr-[11px] pb-[4px]">
        <span class="text-[19px] font-semibold text-[#484644]">Fields</span>
        <svg class="w-[9px] h-[16px]"><use href="#chev-right"/></svg>
      </div>
      <div class="ml-[5px] h-[37px] rounded-l-[3px] border border-r-0 border-[#c8c6c4] bg-white flex items-center pl-[14px] text-[15px] text-[#484644]">
        <svg class="w-[20px] h-[20px]"><use href="#search"/></svg><span class="ml-[11px]">Search</span>
      </div>
      <div class="mt-[5px] border-b border-[#d8d6d4]"></div>
      <div class="mt-[10px] text-[#323130]">
        <div class="h-[34px] flex items-center pl-[4px]"><svg class="w-[16px] h-[9px]"><use href="#chev-down"/></svg><svg class="ml-[9px] w-[16px] h-[15px]"><use href="#table"/></svg><span class="ml-[15px]">Blender</span></div>
        <div class="h-[34px] flex items-center pl-[4px]"><svg class="w-[16px] h-[9px]"><use href="#chev-down"/></svg><svg class="ml-[9px] w-[16px] h-[15px]"><use href="#table"/></svg><span class="ml-[15px]">Equipment</span></div>
        <div class="h-[34px] flex items-center pl-[4px]"><svg class="w-[16px] h-[9px]"><use href="#chev-up"/></svg><span class="relative ml-[9px] w-[16px] h-[15px]"><svg class="w-[16px] h-[15px]"><use href="#table"/></svg><span class="absolute left-[9px] top-[8px] w-[15px] h-[15px] rounded-full bg-[#f2c811] flex items-center justify-center"><svg class="w-[9px] h-[7px]"><use href="#check"/></svg></span></span><span class="ml-[15px] font-semibold">Job</span></div>
        <div class="mt-[5px] h-[30px] flex items-center pl-[14px]"><svg class="w-[16px] h-[9px]"><use href="#chev-down"/></svg><span class="ml-[10px] w-[15px] h-[15px] rounded-[2px] bg-[#f2c811] flex items-center justify-center"><svg class="w-[9px] h-[7px]"><use href="#check"/></svg></span><span class="relative ml-[5px] w-[16px] h-[16px]"><svg class="w-[16px] h-[16px]" viewBox="0 0 16 16"><path d="M.7 2.700h14.600v12.600H.7z" fill="#fff" stroke="#3b3a39" stroke-width="1.200"/><path d="M1 3h14v3H1zM4 0h1.500v3H4zM10.500 0H12v3h-1.500z" fill="#3b3a39"/><path d="M3 8h2v2H3zM7 8h2v2H7zM11 8h2v2h-2zM3 11.500h2v2H3zM7 11.500h2v2H7z" fill="#484644"/></svg><span class="absolute left-[7px] top-[7px] w-[15px] h-[15px] rounded-full bg-[#f2c811] flex items-center justify-center"><svg class="w-[9px] h-[7px]"><use href="#check"/></svg></span></span><span class="ml-[11px] font-semibold">Date</span></div>
        <div class="h-[30px] flex items-center pl-[40px]"><span class="w-[15px] h-[15px] rounded-[2px] bg-[#f2c811] flex items-center justify-center"><svg class="w-[9px] h-[7px]"><use href="#check"/></svg></span><span class="ml-[31px]">Job Name</span></div>
        <div class="h-[30px] flex items-center pl-[40px]"><span class="w-[15px] h-[15px] rounded-[2px] bg-[#f2c811] flex items-center justify-center"><svg class="w-[9px] h-[7px]"><use href="#check"/></svg></span><svg class="ml-[7px] w-[12px] h-[12px]" viewBox="0 0 12 12"><path d="M11 3V1H1l5 5-5 5h10V9" fill="none" stroke="#323130" stroke-width="1.300"/></svg><span class="ml-[12px]">Total Parts</span></div>
        <div class="mt-[2px] h-[34px] flex items-center pl-[4px]"><svg class="w-[16px] h-[9px]"><use href="#chev-down"/></svg><svg class="ml-[9px] w-[16px] h-[15px]"><use href="#table"/></svg><span class="ml-[15px]">Month</span></div>
        <div class="h-[34px] flex items-center pl-[4px]"><svg class="w-[16px] h-[9px]"><use href="#chev-down"/></svg><svg class="ml-[9px] w-[16px] h-[15px]"><use href="#table"/></svg><span class="ml-[15px]">Pre Gel</span></div>
        <div class="h-[34px] flex items-center pl-[4px]"><svg class="w-[16px] h-[9px]"><use href="#chev-down"/></svg><svg class="ml-[9px] w-[16px] h-[15px]"><use href="#table"/></svg><span class="ml-[15px]">Pump</span></div>
      </div>
    </div>
  </div>

  <!-- status bar -->
  <div class="h-[25px] leading-[27px] pl-[4px] text-[13px] text-[#44474b]">PAGE 1 OF 1</div>
  <div class="h-px flex bg-[#1f1f1f]"><div class="ml-[58px] w-[430px] bg-[#a19f9d]"></div></div>
</div>
</body>
</html>
